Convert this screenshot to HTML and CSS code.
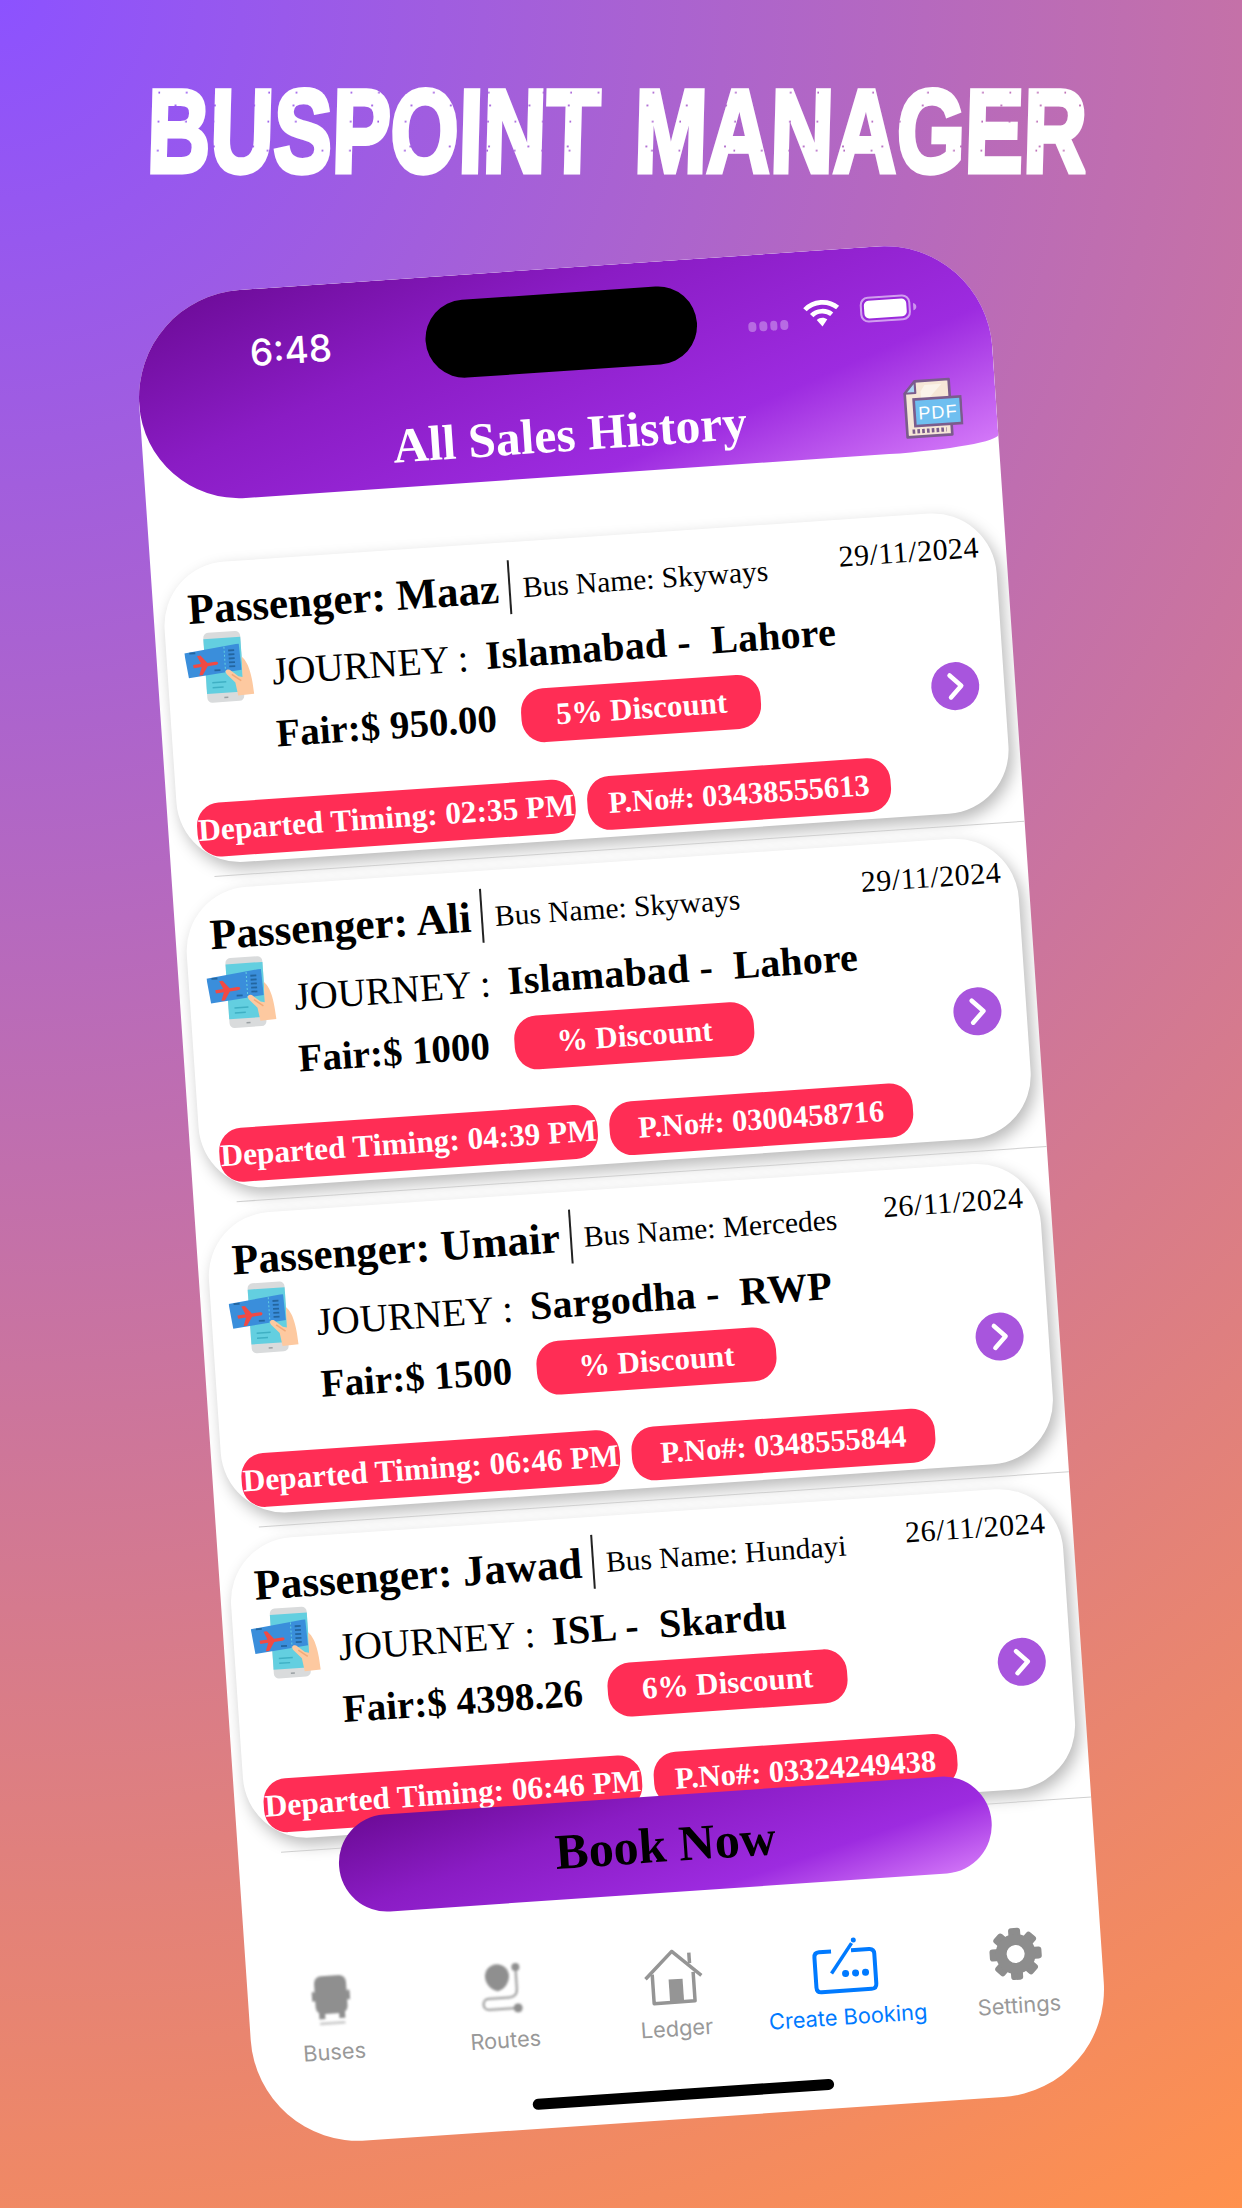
FILE: index.html
```html
<!DOCTYPE html>
<html lang="en">
<head>
<meta charset="utf-8">
<title>Buspoint Manager</title>
<link rel="stylesheet" href="styles.css">
</head>
<body>
<svg class="defs" width="0" height="0" aria-hidden="true">
  <symbol id="ticket" viewBox="0 0 72 72">
    <rect x="20" y="1" width="37" height="70" rx="5" fill="#d9dbdc"/>
    <rect x="20" y="7" width="37" height="55" fill="#63cfe0"/>
    <rect x="37" y="66" width="4" height="1.500" fill="#9aa0a3"/>
    <path d="M0 20 52 14l3 0 1 26-53 5z" fill="#3a8edb"/>
    <path d="M40 16v27" stroke="#63cfe0" stroke-width="1" stroke-dasharray="2 2"/>
    <path d="M8 32l8-.6-3.500-8 3.500-.2 6.500 7.800 8-.6c3.500-.2 3.500 3 0 3.300l-8 .7-5.500 8.500-3.500.2 3-8.500-8 .7z" fill="#f04a44"/>
    <path d="M44 20h6M44 24h6M44 28h6M44 32h6M44 36h6M5 20.500h6M29 39h6" stroke="#23659f" stroke-width="1.800"/>
    <path d="M26 51h14M26 56h11" stroke="#3fb0c4" stroke-width="1.500"/>
    <path d="M57 27c5 5 9 14 10 38l-16 .5-2-13-8-9c-3-4 2-6 4.500-3l7 6 4 1z" fill="#fdc9a0"/>
    <path d="M46 44l9 7" stroke="#f2aa78" stroke-width="1.500"/>
  </symbol>
</svg>

<h1 class="brand"><span class="brand-text">BUSPOINT MANAGER</span></h1>

<main class="phone">
  <header class="app-head">
    <div class="status">
      <span class="time">6:48</span>
      <span class="island"></span>
      <span class="signal"><i></i><i></i><i></i><i></i></span>
      <svg class="wifi" viewBox="0 0 36 27">
        <path d="M2.500 9.500C11 1.500 25 1.500 33.500 9.500" fill="none" stroke="#fff" stroke-width="4.500"/>
        <path d="M8.500 15.500C13.500 10.800 22.500 10.800 27.500 15.500" fill="none" stroke="#fff" stroke-width="4.500"/>
        <path d="M13 20c3-2.500 7-2.500 10 0l-5 6.500z" fill="#fff"/>
      </svg>
      <svg class="battery" viewBox="0 0 56 26">
        <rect x="1.500" y="1.500" width="47" height="23" rx="7" fill="none" stroke="#fff" stroke-opacity=".55" stroke-width="2"/>
        <rect x="4.500" y="4.500" width="41" height="17" rx="4.500" fill="#fff"/>
        <path d="M52 9.500c2 .5 3 2 3 3.500s-1 3-3 3.500z" fill="#fff" fill-opacity=".5"/>
      </svg>
    </div>
    <div class="head-title">
      <span class="head-name">All Sales History</span>
      <svg class="pdf" viewBox="0 0 58 60">
        <path d="M15 2h32v52H5V13z" fill="#f6e7d7" stroke="#7b5c8c" stroke-width="2.500" stroke-linejoin="round"/>
        <path d="M15 2v11H5z" fill="#a9d6f4" stroke="#7b5c8c" stroke-width="2" stroke-linejoin="round"/>
        <path d="M24 6 40 6 20 26V12z" fill="#fbf3ea"/>
        <path d="M10 49h32" stroke="#7b5c8c" stroke-width="4" stroke-dasharray="2.500 2"/>
        <rect x="13" y="19" width="44" height="25" fill="#6fbff0" stroke="#7b5c8c" stroke-width="2.500"/>
        <text x="35" y="38" class="pdf-label" text-anchor="middle">PDF</text>
      </svg>
    </div>
  </header>

  <section class="list">
    <article class="row">
      <div class="card">
        <div class="card-head">
          <span class="passenger">Passenger: Maaz</span>
          <span class="rule"></span>
          <span class="bus">Bus Name: Skyways</span>
          <span class="date">29/11/2024</span>
        </div>
        <div class="trip">
          <svg class="ticket"><use href="#ticket"/></svg>
          <div class="trip-text">
            <div class="journey"><span class="journey-label">JOURNEY :</span><span class="route">Islamabad -  Lahore</span></div>
            <div class="fare-row"><span class="fare">Fair:$ 950.00</span><span class="pill discount">5% Discount</span></div>
          </div>
          <span class="arrow"><svg viewBox="0 0 48 48"><path d="M19 13l11 11-11 11" fill="none" stroke="#fff" stroke-width="4.500" stroke-linecap="round" stroke-linejoin="round"/></svg></span>
        </div>
        <div class="pills">
          <span class="pill timing">Departed Timing: 02:35 PM</span>
          <span class="pill contact">P.No#: 03438555613</span>
        </div>
      </div>
      <div class="sep"></div>
    </article>

    <article class="row">
      <div class="card">
        <div class="card-head">
          <span class="passenger">Passenger: Ali</span>
          <span class="rule"></span>
          <span class="bus">Bus Name: Skyways</span>
          <span class="date">29/11/2024</span>
        </div>
        <div class="trip">
          <svg class="ticket"><use href="#ticket"/></svg>
          <div class="trip-text">
            <div class="journey"><span class="journey-label">JOURNEY :</span><span class="route">Islamabad -  Lahore</span></div>
            <div class="fare-row"><span class="fare">Fair:$ 1000</span><span class="pill discount">% Discount</span></div>
          </div>
          <span class="arrow"><svg viewBox="0 0 48 48"><path d="M19 13l11 11-11 11" fill="none" stroke="#fff" stroke-width="4.500" stroke-linecap="round" stroke-linejoin="round"/></svg></span>
        </div>
        <div class="pills">
          <span class="pill timing">Departed Timing: 04:39 PM</span>
          <span class="pill contact">P.No#: 0300458716</span>
        </div>
      </div>
      <div class="sep"></div>
    </article>

    <article class="row">
      <div class="card">
        <div class="card-head">
          <span class="passenger">Passenger: Umair</span>
          <span class="rule"></span>
          <span class="bus">Bus Name: Mercedes</span>
          <span class="date">26/11/2024</span>
        </div>
        <div class="trip">
          <svg class="ticket"><use href="#ticket"/></svg>
          <div class="trip-text">
            <div class="journey"><span class="journey-label">JOURNEY :</span><span class="route">Sargodha -  RWP</span></div>
            <div class="fare-row"><span class="fare">Fair:$ 1500</span><span class="pill discount">% Discount</span></div>
          </div>
          <span class="arrow"><svg viewBox="0 0 48 48"><path d="M19 13l11 11-11 11" fill="none" stroke="#fff" stroke-width="4.500" stroke-linecap="round" stroke-linejoin="round"/></svg></span>
        </div>
        <div class="pills">
          <span class="pill timing">Departed Timing: 06:46 PM</span>
          <span class="pill contact">P.No#: 0348555844</span>
        </div>
      </div>
      <div class="sep"></div>
    </article>

    <article class="row">
      <div class="card">
        <div class="card-head">
          <span class="passenger">Passenger: Jawad</span>
          <span class="rule"></span>
          <span class="bus">Bus Name: Hundayi</span>
          <span class="date">26/11/2024</span>
        </div>
        <div class="trip">
          <svg class="ticket"><use href="#ticket"/></svg>
          <div class="trip-text">
            <div class="journey"><span class="journey-label">JOURNEY :</span><span class="route">ISL -  Skardu</span></div>
            <div class="fare-row"><span class="fare">Fair:$ 4398.26</span><span class="pill discount">6% Discount</span></div>
          </div>
          <span class="arrow"><svg viewBox="0 0 48 48"><path d="M19 13l11 11-11 11" fill="none" stroke="#fff" stroke-width="4.500" stroke-linecap="round" stroke-linejoin="round"/></svg></span>
        </div>
        <div class="pills">
          <span class="pill timing">Departed Timing: 06:46 PM</span>
          <span class="pill contact">P.No#: 03324249438</span>
        </div>
      </div>
      <div class="sep"></div>
    </article>
  </section>

  <button class="book">Book Now</button>

  <nav class="tabs">
    <div class="tab">
      <svg class="tab-icon soft" viewBox="0 0 60 56">
        <rect x="14" y="3" width="32" height="38" rx="7" fill="#8f8f8f"/>
        <rect x="11" y="18" width="3" height="10" rx="1.500" fill="#8f8f8f"/>
        <rect x="46" y="18" width="3" height="10" rx="1.500" fill="#8f8f8f"/>
        <rect x="17" y="40" width="6" height="6" fill="#8f8f8f"/>
        <rect x="37" y="40" width="6" height="6" fill="#8f8f8f"/>
        <rect x="17" y="49" width="26" height="3" rx="1.500" fill="#d0d0d0"/>
      </svg>
      <span class="tab-label">Buses</span>
    </div>
    <div class="tab">
      <svg class="tab-icon soft" viewBox="0 0 60 56">
        <path d="M26 30C18 28 14 21 14 15a12 12 0 0 1 24 0c0 6-4 13-12 15z" fill="#8f8f8f"/>
        <path d="M45 7v22c0 5-3 8-8 8H16c-7 0-7 11 0 11h28" fill="none" stroke="#a8a8a8" stroke-width="2.500"/>
        <circle cx="45" cy="7" r="4" fill="#8f8f8f"/>
        <circle cx="45" cy="48" r="4.500" fill="#8f8f8f"/>
      </svg>
      <span class="tab-label">Routes</span>
    </div>
    <div class="tab">
      <svg class="tab-icon" viewBox="0 0 60 56">
        <path d="M2 28 30 2l28 26" fill="none" stroke="#959595" stroke-width="3.500" stroke-linejoin="round"/>
        <path d="M47 15V4.500" stroke="#959595" stroke-width="3.500"/>
        <path d="M9 24v29h41V24" fill="none" stroke="#959595" stroke-width="3.500" stroke-linejoin="round"/>
        <rect x="25" y="30" width="14" height="23" fill="#959595"/>
      </svg>
      <span class="tab-label">Ledger</span>
    </div>
    <div class="tab is-active">
      <svg class="tab-icon wide" viewBox="0 0 66 56">
        <path d="M20 13H8c-4 0-5 2-5 5v30c0 3 1 5 5 5h50c4 0 5-2 5-5V18c0-3-1-5-5-5H40" fill="none" stroke="#007aff" stroke-width="4"/>
        <path d="M19 35 41 6" stroke="#007aff" stroke-width="3.500"/>
        <circle cx="43" cy="3" r="2.500" fill="#007aff"/>
        <circle cx="33" cy="36" r="3.500" fill="#007aff"/>
        <circle cx="43" cy="36" r="3.500" fill="#007aff"/>
        <circle cx="53" cy="36" r="3.500" fill="#007aff"/>
      </svg>
      <span class="tab-label">Create Booking</span>
    </div>
    <div class="tab">
      <svg class="tab-icon" viewBox="0 0 60 56">
        <g fill="#8d8d8d">
          <rect x="24" y="2" width="12" height="52" rx="3"/>
          <rect x="24" y="2" width="12" height="52" rx="3" transform="rotate(45 30 28)"/>
          <rect x="24" y="2" width="12" height="52" rx="3" transform="rotate(90 30 28)"/>
          <rect x="24" y="2" width="12" height="52" rx="3" transform="rotate(135 30 28)"/>
          <circle cx="30" cy="28" r="20"/>
        </g>
        <circle cx="30" cy="28" r="9" fill="#fff"/>
      </svg>
      <span class="tab-label">Settings</span>
    </div>
  </nav>

  <div class="home-bar"></div>
</main>
</body>
</html>
```

FILE: styles.css
```css
* { box-sizing: border-box; }

html, body { margin: 0; padding: 0; }

body {
  width: 1242px;
  height: 2208px;
  overflow: hidden;
  background: radial-gradient(circle farthest-corner at 0 0, #8c52ff 0%, #ff914d 100%);
  font-family: "Liberation Serif", serif;
}

.defs { position: absolute; }

.brand {
  margin: 81px 0 0;
  height: 100px;
  line-height: 100px;
  white-space: nowrap;
  font-family: "Liberation Sans", sans-serif;
  font-size: 118px;
  font-weight: 700;
  color: #fff;
}

.brand-text {
  display: inline-block;
  margin-left: -16px;
  word-spacing: 14px;
  -webkit-text-stroke: 5px #fff;
  transform: scaleX(.742) skewX(-2deg);
  -webkit-mask:
    radial-gradient(circle at 40% 40%, transparent .8px, #000 1.4px) 0 0 / 37px 29px,
    radial-gradient(circle at 70% 60%, transparent .8px, #000 1.4px) 0 0 / 53px 41px;
  -webkit-mask-composite: source-in;
  mask-composite: intersect;
}

.phone {
  margin: 85px 0 0 194px;
  width: 855px;
  height: 1855px;
  background: #fff;
  border-radius: 108px;
  overflow: hidden;
  transform: rotate(-3.9deg);
  display: flex;
  flex-direction: column;
}

/* header */
.app-head {
  flex: none;
  height: 208px;
  padding-top: 25px;
  background: linear-gradient(160deg, #6a0a94 0%, #8a1cc4 35%, #9d2be0 72%, #d67cf9 100%);
  border-radius: 0 0 110px 100px / 0 0 12px 100px;
}

.status {
  display: flex;
  align-items: center;
  height: 78px;
}

.time {
  margin-left: 113px;
  width: 84px;
  text-align: center;
  font: 500 37px/40px Inter, sans-serif;
  color: #fff;
}

.island {
  margin-left: 93px;
  width: 272px;
  height: 78px;
  border-radius: 39px;
  background: #000;
}

.signal {
  margin: 16px 0 0 51px;
  width: 40px;
  display: flex;
  gap: 3px;
}

.signal i {
  width: 8px;
  height: 10px;
  border-radius: 4px;
  background: rgba(255, 255, 255, .32);
}

.wifi {
  margin: -4px 0 0 15px;
  width: 38px;
  height: 29px;
}

.battery {
  margin: -4px 0 0 19px;
  width: 58px;
  height: 27px;
}

.head-title {
  margin-top: 32px;
  height: 60px;
  display: grid;
  grid-template-columns: 1fr auto 1fr;
  align-items: center;
}

.head-name {
  grid-column: 2;
  font-size: 49.500px;
  line-height: 60px;
  font-weight: 700;
  color: #fff;
}

.pdf {
  grid-column: 3;
  justify-self: end;
  margin-right: 34px;
  width: 62px;
  height: 64px;
}

.pdf-label {
  font-family: "Liberation Sans", sans-serif;
  font-size: 17px;
  font-weight: 400;
  fill: #fff;
  letter-spacing: 1px;
}

/* list */
.list {
  flex: none;
  padding-top: 50px;
}

.row { padding-top: 12px; }

.card {
  margin: 0 11px 12px 9.500px;
  height: 301px;
  padding: 18px 16px 0 18px;
  background: #fff;
  border-radius: 64px;
  box-shadow: 4px 7px 16px rgba(0, 0, 0, .28);
}

.sep {
  height: 1px;
  margin-left: 43px;
  background: #cfcfcf;
}

.card-head {
  display: flex;
  align-items: flex-start;
  height: 54px;
  margin-left: 7px;
  color: #000;
}

.passenger {
  margin-top: 5px;
  font-size: 43px;
  line-height: 46px;
  font-weight: 700;
  white-space: nowrap;
}

.rule {
  margin-left: 10px;
  width: 2px;
  height: 54px;
  background: #222;
}

.bus {
  margin: 11px 0 0 12px;
  font-size: 29.500px;
  line-height: 34px;
  white-space: nowrap;
}

.date {
  margin: 2px 0 0 auto;
  font-size: 30px;
  line-height: 34px;
  letter-spacing: .500px;
  white-space: nowrap;
}

.trip {
  display: flex;
  align-items: flex-start;
  height: 130px;
}

.ticket {
  flex: none;
  margin-top: -3px;
  width: 72px;
  height: 72px;
}

.trip-text { margin: 19px 0 0 15px; }

.journey {
  display: flex;
  font-size: 39px;
  line-height: 44px;
  white-space: pre;
}

.journey-label { width: 214px; }

.route {
  margin-top: -1px;
  font-size: 40px;
  font-weight: 700;
  letter-spacing: .200px;
}

.fare-row {
  display: flex;
  align-items: center;
  margin-top: 13px;
  height: 54px;
}

.fare {
  margin-top: -1px;
  font-size: 39px;
  line-height: 44px;
  font-weight: 700;
  white-space: nowrap;
}

.pill {
  display: flex;
  align-items: center;
  justify-content: center;
  height: 54px;
  border-radius: 23px;
  background: #ff2d55;
  color: #fff;
  font-weight: 700;
  white-space: nowrap;
}

.discount {
  margin-left: 25px;
  width: 240px;
  font-size: 31px;
}

.arrow {
  flex: none;
  margin: 78px 9px 0 auto;
  width: 48px;
  height: 48px;
  border-radius: 50%;
  background: #a855dd;
}

.arrow svg {
  display: block;
  width: 48px;
  height: 48px;
}

.pills {
  display: flex;
  gap: 12px;
  margin: 38px 0 0 1.500px;
}

.timing {
  width: 379px;
  font-size: 31.300px;
}

.contact {
  width: 304px;
  font-size: 30.500px;
}

/* book button */
.book {
  position: relative;
  z-index: 1;
  flex: none;
  margin: -31px 0 0 100px;
  width: 654px;
  height: 97px;
  padding: 0;
  border: 0;
  border-radius: 48px;
  background: linear-gradient(165deg, #6a0a94 0%, #8a1cc4 35%, #9d2be0 72%, #d67cf9 100%);
  font-family: "Liberation Serif", serif;
  font-size: 50px;
  font-weight: 700;
  color: #000;
}

/* tabs */
.tabs {
  flex: none;
  display: flex;
  margin: 57px 0 0 -3px;
}

.tab {
  flex: 1;
  display: flex;
  flex-direction: column;
  align-items: center;
  color: #999;
}

.tab.is-active { color: #007aff; }

.tab-icon {
  width: 60px;
  height: 56px;
}

.tab-icon.wide { width: 66px; }

.tab-icon.soft { filter: blur(.8px); }

.tab-label {
  margin-top: 8px;
  font-family: Inter, sans-serif;
  font-size: 21.800px;
  line-height: 30px;
  white-space: nowrap;
}

.home-bar {
  flex: none;
  align-self: center;
  margin-top: 46px;
  width: 302px;
  height: 11px;
  border-radius: 6px;
  background: #000;
}
```
